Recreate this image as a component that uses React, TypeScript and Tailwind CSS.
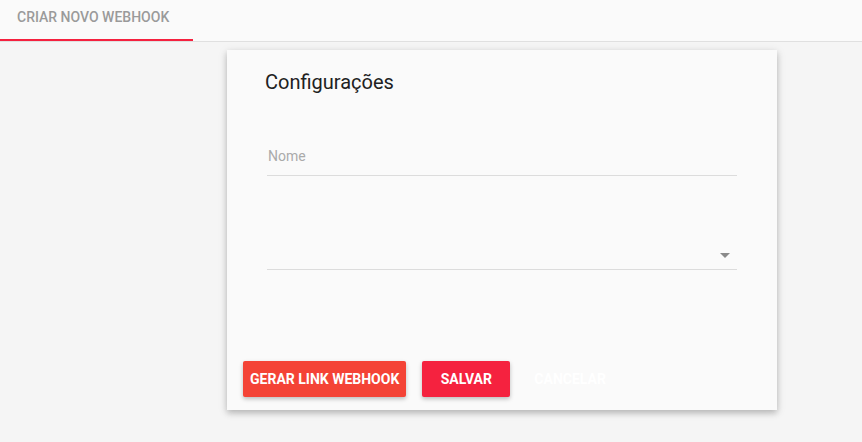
import React from "react";

export default function App() {
  return (
    <div className="w-[862px] h-[442px] bg-[#f5f5f5] overflow-hidden" style={{ fontFamily: "Roboto, 'Liberation Sans', sans-serif" }}>
      <div className="h-[42px] bg-[#fafafa] border-b border-[#e0e0e0] flex">
        <div className="w-[193px] h-[41px] border-b-2 border-[#f5213f] flex items-start pt-[7px] pl-[17px]">
          <span className="text-[14px] font-medium text-[#9a9a9a]">CRIAR NOVO WEBHOOK</span>
        </div>
      </div>
      <div className="pl-[227px] pt-[8px]">
        <div className="w-[550px] h-[360px] bg-[#fafafa] shadow-[0_3px_6px_rgba(0,0,0,0.2),0_2px_10px_rgba(0,0,0,0.1)] flex flex-col">
          <div className="pl-[38px] pt-[18px] text-[20px] leading-[28px] text-[#212121]">Configurações</div>
          <div className="mx-[40px] mt-[32px] h-[48px] border-b border-[#dcdcdc] flex items-end pb-[8px]">
            <span className="text-[14px] text-[#aaaaaa] pl-[1px]">Nome</span>
          </div>
          <div className="mx-[40px] mt-[46px] h-[48px] border-b border-[#dcdcdc] flex items-end justify-end pb-[11px] pr-[7px]">
            <svg width="10" height="5" viewBox="0 0 10 5"><path d="M0 0 L10 0 L5 5 Z" fill="#8a8a8a" /></svg>
          </div>
          <div className="flex-1" />
          <div className="flex items-center pl-[16px] pb-[13px] gap-[16px]">
            <button className="h-[36px] px-[7px] rounded-[2px] bg-[#f44336] text-white text-[14px] font-bold shadow-[0_2px_4px_rgba(0,0,0,0.25)]">GERAR LINK WEBHOOK</button>
            <button className="h-[36px] w-[88px] rounded-[2px] bg-[#f5223f] text-white text-[14px] font-bold shadow-[0_2px_4px_rgba(0,0,0,0.25)]">SALVAR</button>
            <button className="h-[36px] px-[8px] text-white text-[14px] font-bold">CANCELAR</button>
          </div>
        </div>
      </div>
    </div>
  );
}
